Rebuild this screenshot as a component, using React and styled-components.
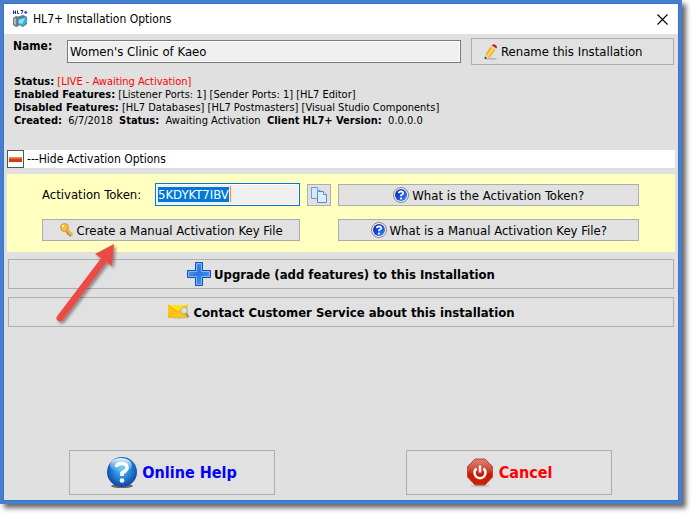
import React, { useEffect, useRef, useState } from "react";
import styled, { createGlobalStyle } from "styled-components";

const GlobalStyle = createGlobalStyle`
  * {
    box-sizing: border-box;
  }
  body {
    margin: 0;
    background: #fff;
    color: #000;
    font-family: "DejaVu Sans Condensed", Tahoma, "Noto Sans", sans-serif;
    font-size: 13px;
  }
`;

const AppIcon = () => (
  <svg width="17" height="18" viewBox="0 0 17 18" aria-hidden="true">
    <path d="M1.500 0.500V4M3.500 0.500V4M1.500 2.300H3.500M5.500 0.500V3.500H7M8.500 0.500H11L9.500 4M12 2.300H15.500M13.800 0.800V4" fill="none" stroke="#1c2fc0" />
    <path d="M1 8l3-2 3 1v9l-3 1-3-2z" fill="#777d80" />
    <path d="M2 9l2-1v7l-2-1z" fill="#b5babb" />
    <path d="M5 7l6-2 4 2v7l-4 3-6-3z" fill="#5f7780" />
    <path d="M6 9l8-2 1 5-4 4-5-2z" fill="#35b5d8" />
    <path d="M7 10l6-2-3 6-3-1z" fill="#8ee2f2" />
  </svg>
);

const CloseIcon = () => (
  <svg width="11" height="11" viewBox="0 0 11 11" aria-hidden="true">
    <path d="M0.500 0.500l10 10M10.500 0.500l-10 10" stroke="#000" strokeWidth="1.100" />
  </svg>
);

const PencilIcon = () => (
  <svg width="14" height="16" viewBox="0 0 14 16" aria-hidden="true">
    <ellipse cx="7" cy="14.700" rx="6.500" ry="1" fill="#bcbcbc" />
    <path d="M1.500 10l5.500-8 5 3L6 13.500l-4.500 1z" fill="#f5b52b" />
    <path d="M4 11.500l6-8" stroke="#ffdf75" strokeWidth="1.600" />
    <path d="M7.500 2l1.500-1.700q3.500 0 4 3L12 5z" fill="#c0202c" />
    <path d="M6.800 2.700l1-1.200 4.700 3-1 1.300z" fill="#ddd" />
    <path d="M1.500 10l4 3.200L0.700 15z" fill="#ead3aa" />
    <path d="M1 12.500l2 1.700L0.500 15z" fill="#222" />
  </svg>
);

const KeyIcon = () => (
  <svg width="14" height="14" viewBox="0 0 14 14" aria-hidden="true">
    <path d="M6 7l6 5.500" stroke="#b98422" strokeWidth="3.400" />
    <path d="M6 6.500l6.300 5.800" stroke="#f0bd4b" strokeWidth="2" />
    <path d="M8 10l-1 1.500M10 11.500l-1 1.500" stroke="#c48e2c" strokeWidth="1.400" />
    <circle cx="4.500" cy="4.500" r="4" fill="#f3bd45" stroke="#d39a2f" />
    <circle cx="3" cy="3" r="1.200" fill="#fff0c4" />
  </svg>
);

const CopyIcon = () => (
  <svg width="16" height="16" viewBox="0 0 16 16" aria-hidden="true">
    <path d="M0.500 0.500h6l3 3v8h-9z" fill="#d5e7fb" stroke="#6e9bd0" />
    <path d="M6.500 0.500v3h3" fill="#fff" stroke="#6e9bd0" />
    <path d="M6.500 4.500h6l3 3v8h-9z" fill="#dcecff" stroke="#5b8bc9" />
    <path d="M12.500 4.500v3h3" fill="#fff" stroke="#5b8bc9" />
  </svg>
);

const QuestionIcon = () => (
  <svg width="16" height="16" viewBox="0 0 16 16" aria-hidden="true">
    <defs>
      <linearGradient id="question" x1="0" y1="0" x2="1" y2="1">
        <stop offset="0" stopColor="#082a9e" />
        <stop offset="0.500" stopColor="#1747dc" />
        <stop offset="1" stopColor="#37a2ff" />
      </linearGradient>
    </defs>
    <circle cx="8" cy="8" r="7.500" fill="#f5f5f5" stroke="#858585" />
    <circle cx="8" cy="8" r="6" fill="url(#question)" />
    <path d="M5.700 6.200Q5.900 4.300 8 4.300Q10.400 4.400 10.200 6.200Q10.100 7.300 8 8.300V9.300" fill="none" stroke="#fff" strokeWidth="1.800" />
    <circle cx="8" cy="11.500" r="1.100" fill="#fff" />
  </svg>
);

const PlusIcon = () => (
  <svg width="24" height="24" viewBox="0 0 24 24" aria-hidden="true">
    <defs>
      <linearGradient id="plus" x1="0" y1="0" x2="1" y2="1">
        <stop offset="0" stopColor="#67aaf5" />
        <stop offset="0.450" stopColor="#2f73db" />
        <stop offset="1" stopColor="#43a3fa" />
      </linearGradient>
    </defs>
    <path d="M9 0h6q1 0 1 1V8h7q1 0 1 1v6q0 1-1 1H16v7q0 1-1 1H9q-1 0-1-1V16H1q-1 0-1-1V9q0-1 1-1H8V1q0-1 1-1z" fill="#194dad" />
    <path d="M9.500 1.500h5v8h8v5h-8v8h-5v-8h-8v-5h8z" fill="url(#plus)" stroke="#7abdff" />
  </svg>
);

const MailIcon = () => (
  <svg width="23" height="16" viewBox="0 0 23 16" aria-hidden="true">
    <path d="M0 13.500l2-1h20v1q-8 2-22 0z" fill="#c3ae83" />
    <path d="M1 1h19.500v12.500H1z" fill="#ffc414" />
    <path d="M1 1h19.500l-9.300 7z" fill="#ffe418" />
    <path d="M1 1l10 7 9.500-7M1 13.500l7.500-7M20.500 13.500l-7-7" fill="none" stroke="#f7a313" strokeWidth="0.900" />
    <path d="M19 9l2.600 4" stroke="#79919d" strokeWidth="1.800" />
    <circle cx="17" cy="6.500" r="3.300" fill="#d8eef1" fillOpacity="0.800" stroke="#b0b08f" />
  </svg>
);

const HelpIcon = () => (
  <svg width="30" height="32" viewBox="0 0 30 32" aria-hidden="true">
    <defs>
      <radialGradient id="help" cx="0.500" cy="0.420" r="0.600">
        <stop offset="0" stopColor="#53c5f2" />
        <stop offset="0.500" stopColor="#2583d8" />
        <stop offset="1" stopColor="#0d3c99" />
      </radialGradient>
      <linearGradient id="shine" x1="0" y1="0" x2="0" y2="1">
        <stop offset="0" stopColor="#fff" stopOpacity="0.950" />
        <stop offset="1" stopColor="#8fdcff" stopOpacity="0.100" />
      </linearGradient>
    </defs>
    <ellipse cx="15" cy="29" rx="11" ry="2" fill="#666" />
    <circle cx="15" cy="15" r="15" fill="url(#help)" />
    <ellipse cx="14" cy="8" rx="11" ry="7" fill="url(#shine)" />
    <path d="M9.500 10Q9.700 6.500 14.700 6.500Q20.500 6.600 20 11Q19.700 13.500 15 16V19" fill="none" stroke="#fff" strokeWidth="3.600" />
    <circle cx="15" cy="23.500" r="2.300" fill="#fff" />
  </svg>
);

const PowerIcon = () => (
  <svg width="28" height="30" viewBox="0 0 28 30" aria-hidden="true">
    <defs>
      <linearGradient id="power" x1="0" y1="0" x2="0" y2="1">
        <stop offset="0" stopColor="#df8174" />
        <stop offset="0.400" stopColor="#cf4b38" />
        <stop offset="0.600" stopColor="#c31b04" />
        <stop offset="1" stopColor="#ce2204" />
      </linearGradient>
    </defs>
    <ellipse cx="14" cy="28" rx="10" ry="1.500" fill="#c9c5c4" />
    <path d="M9 1h10l7.500 7.500v10.500L19 27H9l-7.500-8V8.500z" fill="url(#power)" stroke="#b8493d" />
    <path d="M10.500 10.500a5.500 5.500 0 1 0 7 0" fill="none" stroke="#fff" strokeWidth="2.400" />
    <path d="M14 7.500v7" stroke="#fff" strokeWidth="2.400" />
  </svg>
);

const Page = styled.div`
  display: flex;
  min-height: 100vh;
  padding: 0 15px 15px 0;
`;

const Dialog = styled.main`
  flex: 1;
  display: flex;
  flex-direction: column;
  border: 3px solid #4f7bc8;
  box-shadow: 4px 4px 5px #666;
  background: #e0e0e0;
`;

const Inner = styled.div`
  flex: 1;
  display: flex;
  flex-direction: column;
  border: 1px solid #1c80d8;
`;

const TitleBar = styled.header`
  display: flex;
  align-items: center;
  gap: 4px;
  height: 30px;
  padding: 0 10px 0 8px;
  background: #fff;
`;

const Title = styled.h1`
  flex: 1;
  margin: 0;
  font-size: 12px;
  font-weight: normal;
`;

const CloseButton = styled.button`
  display: flex;
  padding: 0;
  border: 0;
  background: none;
`;

const NameRow = styled.div`
  display: flex;
  align-items: center;
  gap: 10px;
  padding: 4px 4px 0 9px;
`;

const NameLabel = styled.label`
  width: 44px;
  padding-bottom: 12px;
  font-size: 12px;
  font-weight: bold;
`;

const TextBox = styled.input`
  flex: 1;
  min-width: 0;
  height: 23px;
  padding: 0 2px;
  border: 1px solid ${(props) => (props.$active ? "#0078d7" : "#7a7a7a")};
  outline: 0;
  box-shadow: inset 0 0 0 1px #fff;
  background: #f0f0f0;
  color: #000;
  font: inherit;
  &::selection {
    background: #0078d7;
    color: #fff;
  }
`;

const Button = styled.button`
  display: flex;
  align-items: center;
  justify-content: center;
  gap: ${(props) => props.$gap || 3}px;
  height: ${(props) => props.$height || 22}px;
  padding: 0;
  border: 1px solid #adadad;
  background: #e1e1e1;
  color: ${(props) => props.$color || "#000"};
  font-family: inherit;
  font-size: ${(props) => props.$size || 13}px;
  font-weight: ${(props) => (props.$bold ? "bold" : "normal")};
  white-space: nowrap;
`;

const RenameButton = styled(Button)`
  justify-content: flex-start;
  width: 203px;
  padding-left: 12px;
`;

const Details = styled.section`
  padding: 10px 10px 0;
  font-size: 11px;
  line-height: 13px;
`;

const Line = styled.p`
  margin: 0;
`;

const Live = styled.span`
  color: #f00;
`;

const ToggleRow = styled.div`
  display: flex;
  align-items: center;
  gap: 3px;
  height: 18px;
  margin: 23px 3px 0;
  background: #fff;
  font-size: 12px;
`;

const ToggleButton = styled.button`
  display: flex;
  align-items: center;
  justify-content: center;
  width: 17px;
  height: 18px;
  padding: 0;
  border: 1px solid #555;
  background: #fff;
`;

const Minus = styled.span`
  width: 13px;
  height: 5px;
  background: linear-gradient(#f3a06c, #d6440c 50%, #c33c0a);
`;

const Activation = styled.section`
  position: relative;
  display: grid;
  grid-template-columns: minmax(0, 258fr) 24px minmax(0, 300fr);
  align-items: end;
  gap: 13px 7px;
  margin: 6px 3px 0;
  padding: 9px 36px 11px 35px;
  background: #ffffc0;
`;

const TokenField = styled.div`
  position: relative;
  display: flex;
  align-items: center;
`;

const TokenLabel = styled.label`
  width: 113px;
`;

const Caret = styled.span`
  position: absolute;
  top: 3px;
  left: 188px;
  width: 1px;
  height: 16px;
  background: #ff8728;
`;

const WideButton = styled(Button)`
  grid-column: ${(props) => props.$column};
`;

const Pointer = styled.svg`
  position: absolute;
  top: 68px;
  left: 43px;
  pointer-events: none;
`;

const Actions = styled.div`
  display: flex;
  flex-direction: column;
  gap: 8px;
  padding: 7px 4px 0;
`;

const Footer = styled.footer`
  display: flex;
  justify-content: space-between;
  gap: 20px;
  margin-top: auto;
  padding: 0 66px 5px 65px;
`;

const FooterButton = styled(Button)`
  flex: 0 1 206px;
`;

const App = () => {
  const [open, setOpen] = useState(true);
  const tokenRef = useRef(null);

  useEffect(() => {
    if (open) {
      tokenRef.current.focus();
      tokenRef.current.select();
    }
  }, [open]);

  return (
    <Page>
      <GlobalStyle />
      <Dialog>
        <Inner>
          <TitleBar>
            <AppIcon />
            <Title>HL7+ Installation Options</Title>
            <CloseButton aria-label="Close">
              <CloseIcon />
            </CloseButton>
          </TitleBar>
          <NameRow>
            <NameLabel htmlFor="name">Name:</NameLabel>
            <TextBox id="name" defaultValue="Women's Clinic of Kaeo" />
            <RenameButton $height={27}>
              <PencilIcon />
              Rename this Installation
            </RenameButton>
          </NameRow>
          <Details>
            <Line>
              <b>Status:</b> <Live>[LIVE - Awaiting Activation]</Live>
            </Line>
            <Line>
              <b>Enabled Features:</b> [Listener Ports: 1] [Sender Ports: 1] [HL7 Editor]
            </Line>
            <Line>
              <b>Disabled Features:</b> [HL7 Databases] [HL7 Postmasters] [Visual Studio Components]
            </Line>
            <Line>
              <b>Created:</b>&nbsp; 6/7/2018&nbsp; <b>Status:</b>&nbsp; Awaiting Activation&nbsp; <b>Client HL7+ Version:</b>&nbsp; 0.0.0.0
            </Line>
          </Details>
          <ToggleRow>
            <ToggleButton
              id="toggle"
              aria-labelledby="toggle-label"
              aria-expanded={open}
              onClick={() => setOpen(!open)}
            >
              <Minus />
            </ToggleButton>
            <label id="toggle-label" htmlFor="toggle">---Hide Activation Options</label>
          </ToggleRow>
          {open && (
            <Activation>
              <TokenField>
                <TokenLabel htmlFor="token">Activation Token:</TokenLabel>
                <TextBox id="token" ref={tokenRef} $active defaultValue="5KDYKT7IBV" />
                <Caret />
              </TokenField>
              <Button aria-label="Copy">
                <CopyIcon />
              </Button>
              <Button>
                <QuestionIcon />
                What is the Activation Token?
              </Button>
              <WideButton $column="1">
                <KeyIcon />
                Create a Manual Activation Key File
              </WideButton>
              <WideButton $column="3">
                <QuestionIcon />
                What is a Manual Activation Key File?
              </WideButton>
              <Pointer width="76" height="86" viewBox="0 0 76 86" aria-hidden="true">
                <defs>
                  <filter id="shadow" x="-20%" y="-20%" width="150%" height="150%">
                    <feDropShadow dx="2" dy="2" stdDeviation="1.500" floodOpacity="0.400" />
                  </filter>
                </defs>
                <g filter="url(#shadow)" fill="#ea4b45">
                  <path d="M10 76L57 14" stroke="#ea4b45" strokeWidth="7" strokeLinecap="round" />
                  <path d="M64 2L45 12L62 24z" />
                </g>
              </Pointer>
            </Activation>
          )}
          <Actions>
            <Button $bold $height={30}>
              <PlusIcon />
              Upgrade (add features) to this Installation
            </Button>
            <Button $bold $height={30}>
              <MailIcon />
              Contact Customer Service about this installation
            </Button>
          </Actions>
          <Footer>
            <FooterButton $bold $height={45} $size={16} $gap={5} $color="#00f">
              <HelpIcon />
              Online Help
            </FooterButton>
            <FooterButton $bold $height={45} $size={16} $gap={5} $color="#f00">
              <PowerIcon />
              Cancel
            </FooterButton>
          </Footer>
        </Inner>
      </Dialog>
    </Page>
  );
};

export default App;
